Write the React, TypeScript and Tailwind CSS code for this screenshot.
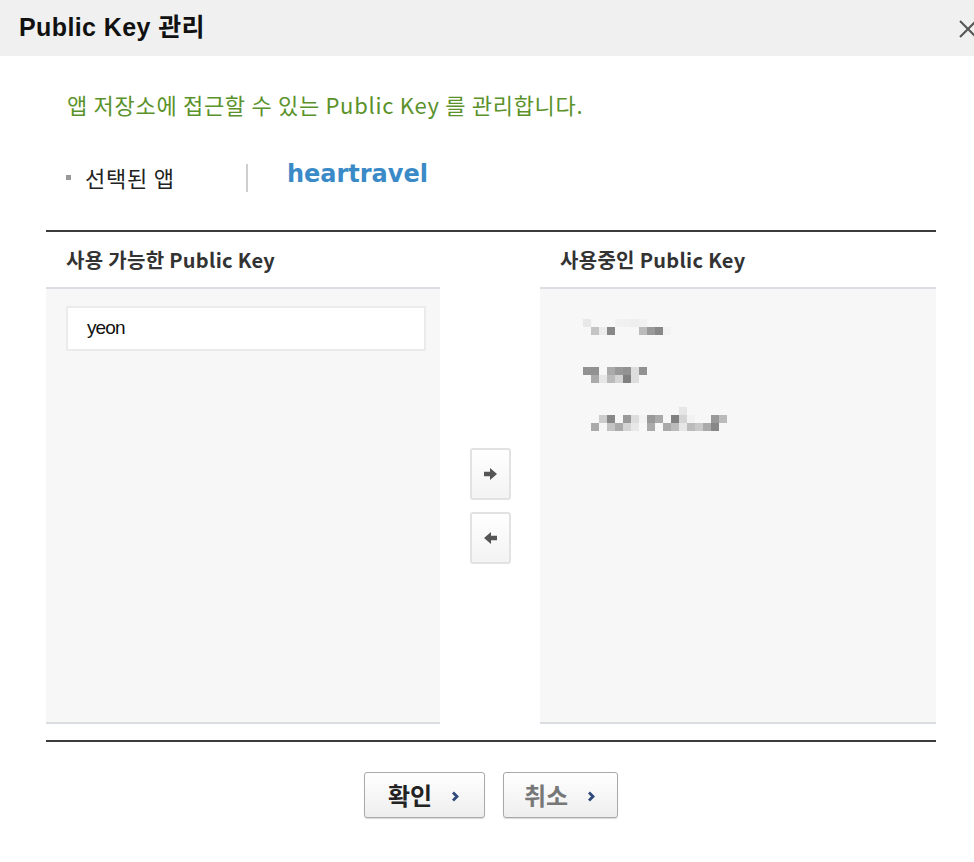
import * as React from 'react';

const KR = "font-['Noto_Sans_CJK_KR',sans-serif]";

// pixelated (mosaic) key names on an 8px grid, [x, y, colour]
const MOSAIC: [number, number, string][] = [
  [583, 319, '#e8e8e8'], [615, 319, '#f1f1f1'], [623, 319, '#f0f0f0'], [631, 319, '#eeeeee'], [639, 319, '#f1f1f1'],
  [591, 327, '#c4c4c4'], [599, 327, '#ececec'], [607, 327, '#888888'], [639, 327, '#bbbbbb'], [647, 327, '#999999'], [655, 327, '#888888'], [663, 327, '#f2f2f2'],
  [583, 367, '#929292'], [591, 367, '#929292'], [607, 367, '#aaaaaa'], [615, 367, '#999999'], [623, 367, '#929292'], [631, 367, '#dddddd'], [639, 367, '#929292'],
  [591, 375, '#aaaaaa'], [599, 375, '#e6e6e6'], [607, 375, '#bbbbbb'], [615, 375, '#d4d4d4'], [623, 375, '#808080'], [631, 375, '#dddddd'],
  [679, 407, '#e6e6e6'],
  [599, 415, '#cccccc'], [607, 415, '#888888'], [623, 415, '#999999'], [631, 415, '#dddddd'], [639, 415, '#f3f3f3'], [647, 415, '#999999'], [655, 415, '#aaaaaa'], [671, 415, '#808080'], [679, 415, '#d4d4d4'], [687, 415, '#f2f2f2'], [711, 415, '#999999'], [719, 415, '#bbbbbb'],
  [591, 423, '#aaaaaa'], [607, 423, '#c4c4c4'], [615, 423, '#aaaaaa'], [623, 423, '#d4d4d4'], [631, 423, '#e8e8e8'], [647, 423, '#aaaaaa'], [663, 423, '#aaaaaa'], [671, 423, '#bbbbbb'], [679, 423, '#e6e6e6'], [687, 423, '#bbbbbb'], [695, 423, '#c8c8c8'], [703, 423, '#aaaaaa'], [711, 423, '#888888'],
];

function Chevron() {
  return (
    <svg width="9" height="11" viewBox="0 0 9 11" className="ml-[19px] mt-[2px]">
      <path d="M2 1.5 L6 5.5 L2 9.5" fill="none" stroke="#2f4a78" strokeWidth="2.8" />
    </svg>
  );
}

function ArrowButton({ dir }: { dir: 'right' | 'left' }) {
  return (
    <button
      type="button"
      className="w-[41px] h-[52px] flex items-center justify-center rounded-[3px] border-2 border-[#e2e2e2] bg-gradient-to-b from-white to-[#f3f3f3]"
    >
      <svg width="15" height="14" viewBox="0 0 15 14" className={dir === 'left' ? 'rotate-180' : ''}>
        <path d="M1 4.8 H7 V1 L14 7 L7 13 V9.2 H1 Z" fill="#555" />
      </svg>
    </button>
  );
}

function Panel({ children }: { children?: React.ReactNode }) {
  return (
    <div className="flex-1 h-[437px] bg-[#f7f7f7] border-t-2 border-b-2 border-[#dadee3]">
      {children}
    </div>
  );
}

export default function App() {
  return (
    <div className={`w-[974px] h-[862px] bg-white overflow-hidden ${KR}`}>
      {/* title bar */}
      <div className="h-[56px] bg-[#f0f0f0] flex items-center justify-between pl-[19px]">
        <h1 className="text-[25px] font-bold text-[#111] font-['Liberation_Sans','Noto_Sans_CJK_KR',sans-serif] tracking-[0.4px]">
          Public Key 관리
        </h1>
        <svg width="20" height="20" viewBox="0 0 20 20" className="mr-[-4px] mt-[2px]">
          <path d="M2 2 L18 18 M18 2 L2 18" stroke="#555" strokeWidth="2" />
        </svg>
      </div>

      {/* description */}
      <p className="pl-[67px] pt-[34px] h-[62px] leading-[28px] text-[22px] text-[#5b922b] tracking-[0.7px]">
        앱 저장소에 접근할 수 있는 Public Key 를 관리합니다.
      </p>

      <div className="flex items-center h-[30px] mt-[44px] pl-[66px]">
        <span className="w-[5px] h-[5px] bg-[#9a9a9a] mr-[14px]" />
        <span className="text-[22px] text-[#222] leading-[28px] tracking-[0.8px]">선택된 앱</span>
        <span className="w-[2px] h-[28px] bg-[#cfcfcf] ml-[71px] mt-[2px]" />
        <span className="ml-[39px] -mt-[6px] text-[24px] font-bold text-[#3b8ac8] font-['DejaVu_Sans',sans-serif]">
          heartravel
        </span>
      </div>

      {/* key lists */}
      <div className="ml-[46px] w-[890px] mt-[38px] border-t-2 border-[#3c3c3c]">
        <div className="flex h-[55px] items-center">
          <div className="w-[394px] pl-[20px] text-[20px] font-bold text-[#333] tracking-[0.3px]">사용 가능한 Public Key</div>
          <div className="w-[100px]" />
          <div className="pl-[20px] text-[20px] font-bold text-[#333] tracking-[0.3px]">사용중인 Public Key</div>
        </div>
        <div className="flex">
          <Panel>
            <div className="ml-[20px] mr-[14px] mt-[17px] h-[45px] bg-white border-2 border-[#ebebeb] flex items-center pl-[19px] text-[19px] text-[#111] font-['Liberation_Sans',sans-serif] tracking-[-0.9px]">
              yeon
            </div>
          </Panel>
          <div className="w-[100px] flex flex-col items-center justify-center gap-[12px] pt-[1px]">
            <ArrowButton dir="right" />
            <ArrowButton dir="left" />
          </div>
          <Panel>
            <svg width="396" height="160" viewBox="540 289 396 160" className="block">
              {MOSAIC.map(([x, y, c], i) => (
                <rect key={i} x={x} y={y} width="8" height="8" fill={c} />
              ))}
            </svg>
          </Panel>
        </div>
        <div className="mt-[16px] border-t-2 border-[#3c3c3c]" />
      </div>

      {/* actions */}
      <div className="flex justify-center gap-[18px] mt-[30px] pl-[7px]">
        <button
          type="button"
          className="w-[121px] h-[46px] flex items-center justify-center rounded-[3px] border border-[#a9a9a9] bg-gradient-to-b from-white to-[#eeeeee] shadow-[0_1px_1px_rgba(0,0,0,.15)] text-[24px] font-bold text-[#222]"
        >
          확인
          <Chevron />
        </button>
        <button
          type="button"
          className="w-[115px] h-[46px] flex items-center justify-center rounded-[3px] border border-[#a9a9a9] bg-gradient-to-b from-white to-[#eeeeee] shadow-[0_1px_1px_rgba(0,0,0,.15)] text-[24px] font-bold text-[#777]"
        >
          취소
          <Chevron />
        </button>
      </div>
    </div>
  );
}
